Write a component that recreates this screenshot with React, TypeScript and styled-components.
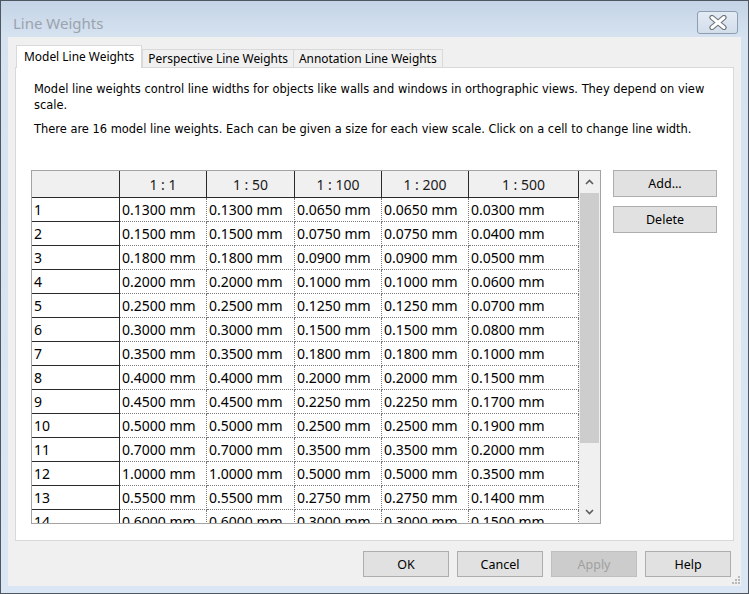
import styled, { createGlobalStyle } from "styled-components";

const GlobalStyle = createGlobalStyle`
  html, body {
    margin: 0;
    padding: 0;
    background: #ffffff;
  }
  body {
    font-family: "Noto Sans", "Open Sans", sans-serif;
    color: #000;
  }
`;

const scales = ["1 : 1", "1 : 50", "1 : 100", "1 : 200", "1 : 500"];

const weights: string[][] = [
  ["0.1300", "0.1300", "0.0650", "0.0650", "0.0300"],
  ["0.1500", "0.1500", "0.0750", "0.0750", "0.0400"],
  ["0.1800", "0.1800", "0.0900", "0.0900", "0.0500"],
  ["0.2000", "0.2000", "0.1000", "0.1000", "0.0600"],
  ["0.2500", "0.2500", "0.1250", "0.1250", "0.0700"],
  ["0.3000", "0.3000", "0.1500", "0.1500", "0.0800"],
  ["0.3500", "0.3500", "0.1800", "0.1800", "0.1000"],
  ["0.4000", "0.4000", "0.2000", "0.2000", "0.1500"],
  ["0.4500", "0.4500", "0.2250", "0.2250", "0.1700"],
  ["0.5000", "0.5000", "0.2500", "0.2500", "0.1900"],
  ["0.7000", "0.7000", "0.3500", "0.3500", "0.2000"],
  ["1.0000", "1.0000", "0.5000", "0.5000", "0.3500"],
  ["0.5500", "0.5500", "0.2750", "0.2750", "0.1400"],
  ["0.6000", "0.6000", "0.3000", "0.3000", "0.1500"],
  ["0.8000", "0.8000", "0.4000", "0.4000", "0.2000"],
  ["1.2000", "1.2000", "0.6000", "0.6000", "0.2500"],
];

const Chevron = ({ up }: { up?: boolean }) => (
  <svg width="9" height="6" viewBox="0 0 9 6">
    <path
      d={up ? "M1 5 L4.5 1.5 L8 5" : "M1 1 L4.5 4.5 L8 1"}
      fill="none"
      stroke="#5c5c5c"
      strokeWidth="1.6"
    />
  </svg>
);

const CloseGlyph = () => (
  <svg width="20" height="15" viewBox="0 0 20 15">
    <path d="M4 2.5 L16 12.5 M16 2.5 L4 12.5" stroke="#6d7279" strokeWidth="5.2" strokeLinecap="round" />
    <path d="M4 2.5 L16 12.5 M16 2.5 L4 12.5" stroke="#ffffff" strokeWidth="3" strokeLinecap="round" />
  </svg>
);

const Grip = () => (
  <svg width="8" height="8" viewBox="0 0 8 8">
    {[
      [6, 0],
      [3, 3],
      [6, 3],
      [0, 6],
      [3, 6],
      [6, 6],
    ].map(([x, y]) => (
      <rect key={`${x}-${y}`} x={x} y={y} width="2" height="2" fill="#b8b8b8" />
    ))}
  </svg>
);

export default function App() {
  return (
    <>
      <GlobalStyle />
      <Window>
        <TitleBar>
          <Title>Line Weights</Title>
          <CloseButton>
            <CloseGlyph />
          </CloseButton>
        </TitleBar>
        <Client>
          <TabStrip>
            <Tab active>Model Line Weights</Tab>
            <Tab>Perspective Line Weights</Tab>
            <Tab>Annotation Line Weights</Tab>
          </TabStrip>
          <Panel>
            <Description>
              <p>
                Model line weights control line widths for objects like walls and windows in
                orthographic views. They depend on view scale.
              </p>
              <p>
                There are 16 model line weights. Each can be given a size for each view scale.
                Click on a cell to change line width.
              </p>
            </Description>
            <Body>
              <TableFrame>
                <Grid>
                  <HeadCell />
                  {scales.map((s) => (
                    <HeadCell key={s}>{s}</HeadCell>
                  ))}
                  {weights.map((row, i) => (
                    <Row key={i}>
                      <RowHead>{i + 1}</RowHead>
                      {row.map((v, j) => (
                        <Cell key={j}>{v} mm</Cell>
                      ))}
                    </Row>
                  ))}
                </Grid>
                <ScrollBar>
                  <ArrowBox>
                    <Chevron up />
                  </ArrowBox>
                  <Track>
                    <Thumb />
                  </Track>
                  <ArrowBox>
                    <Chevron />
                  </ArrowBox>
                </ScrollBar>
              </TableFrame>
              <SideButtons>
                <Button>Add...</Button>
                <Button>Delete</Button>
              </SideButtons>
            </Body>
          </Panel>
          <Footer>
            <Button wide>OK</Button>
            <Button wide>Cancel</Button>
            <Button wide disabled>
              Apply
            </Button>
            <Button wide>Help</Button>
          </Footer>
          <GripCorner>
            <Grip />
          </GripCorner>
        </Client>
      </Window>
    </>
  );
}

const Window = styled.div`
  width: 749px;
  height: 594px;
  box-sizing: border-box;
  border: 1px solid #4e5661;
  background: linear-gradient(#c4d4e6 0px, #d6e2f0 36px, #dae6f3 100%);
  padding: 0 7px 7px 7px;
  display: flex;
  flex-direction: column;
`;

const TitleBar = styled.div`
  height: 36px;
  display: flex;
  align-items: flex-start;
  justify-content: space-between;
`;

const Title = styled.div`
  padding: 12px 0 0 5px;
  font-family: "Noto Sans", sans-serif;
  font-size: 15px;
  line-height: 20px;
  color: #9ba3ad;
`;

const CloseButton = styled.div`
  margin: 10px 3px 0 0;
  width: 41px;
  height: 23px;
  box-sizing: border-box;
  border: 1px solid #8e9db0;
  border-radius: 3px;
  background: linear-gradient(#e3ebf5, #d3deeb);
  display: flex;
  align-items: center;
  justify-content: center;
`;

const Client = styled.div`
  position: relative;
  flex: 1;
  background: #f0f0f0;
  padding: 8px 7px 9px 7px;
  display: flex;
  flex-direction: column;
`;

const TabStrip = styled.div`
  display: flex;
  align-items: flex-end;
  padding-left: 1px;
  position: relative;
  z-index: 1;
  margin-bottom: -1px;
`;

const Tab = styled.div<{ active?: boolean }>`
  height: ${(p) => (p.active ? 23 : 19)}px;
  box-sizing: border-box;
  padding: 0 ${(p) => (p.active ? 7 : 5)}px;
  margin-right: ${(p) => (p.active ? 0 : -1)}px;
  border: 1px solid #d9d9d9;
  border-bottom: ${(p) => (p.active ? "none" : "1px solid #d9d9d9")};
  background: ${(p) => (p.active ? "#ffffff" : "#f0f0f0")};
  font-size: 11.95px;
  line-height: ${(p) => (p.active ? 21 : 17)}px;
  color: #000;
  white-space: nowrap;
`;

const Panel = styled.div`
  flex: 1;
  background: #ffffff;
  border: 1px solid #d9d9d9;
  padding: 13px 16px 0 15px;
  display: flex;
  flex-direction: column;
`;

const Description = styled.div`
  padding: 0 0 0 3px;
  font-family: "DejaVu Sans", Verdana, sans-serif;
  font-size: 11.45px;
  line-height: 16px;
  color: #000;

  p {
    margin: 0 0 8px 0;
  }
`;

const Body = styled.div`
  margin-top: 25px;
  display: flex;
  align-items: flex-start;
  gap: 12px;
`;

const TableFrame = styled.div`
  width: 570px;
  height: 354px;
  box-sizing: border-box;
  border: 1px solid #a3a3a3;
  display: flex;
  overflow: hidden;
`;

const Grid = styled.div`
  display: grid;
  grid-template-columns: 88px 87px 88px 87px 87px 110px;
  grid-auto-rows: 24px;
  grid-template-rows: 27px;
  align-content: start;
  height: 100%;
  overflow: hidden;
  font-size: 14px;
`;

const Row = styled.div`
  display: contents;
`;

const HeadCell = styled.div`
  box-sizing: border-box;
  background: #f0f0f0;
  border-right: 1px solid #2a2a2a;
  border-bottom: 1px solid #2a2a2a;
  display: flex;
  align-items: center;
  justify-content: center;
  color: #1a1a1a;
`;

const RowHead = styled.div`
  box-sizing: border-box;
  background: #ffffff;
  border-right: 1px solid #2a2a2a;
  border-bottom: 1px solid #2a2a2a;
  padding-left: 2px;
  display: flex;
  align-items: center;
`;

const Cell = styled.div`
  box-sizing: border-box;
  background: #ffffff;
  border-right: 1px dotted #7a7a7a;
  border-bottom: 1px dotted #7a7a7a;
  padding-left: 2px;
  display: flex;
  align-items: center;
  white-space: nowrap;
`;

const ScrollBar = styled.div`
  width: 21px;
  flex-shrink: 0;
  background: #f0f0f0;
  display: flex;
  flex-direction: column;
`;

const ArrowBox = styled.div`
  height: 22px;
  display: flex;
  align-items: center;
  justify-content: center;
`;

const Track = styled.div`
  flex: 1;
  padding: 0 1px;
`;

const Thumb = styled.div`
  height: 250px;
  background: #cdcdcd;
`;

const SideButtons = styled.div`
  display: flex;
  flex-direction: column;
  gap: 9px;
`;

const Button = styled.button<{ wide?: boolean }>`
  width: ${(p) => (p.wide ? 86 : 104)}px;
  height: ${(p) => (p.wide ? 26 : 27)}px;
  box-sizing: border-box;
  border: 1px solid #adadad;
  background: #e1e1e1;
  font-family: "Noto Sans", sans-serif;
  font-size: 12.5px;
  color: #000;
  padding: 0;

  &:disabled {
    background: #cccccc;
    border-color: #bfbfbf;
    color: #a0a0a0;
  }
`;

const Footer = styled.div`
  margin-top: 10px;
  display: flex;
  justify-content: flex-end;
  gap: 8px;
  padding-right: 3px;
`;

const GripCorner = styled.div`
  position: absolute;
  right: 1px;
  bottom: 2px;
  line-height: 0;
`;
